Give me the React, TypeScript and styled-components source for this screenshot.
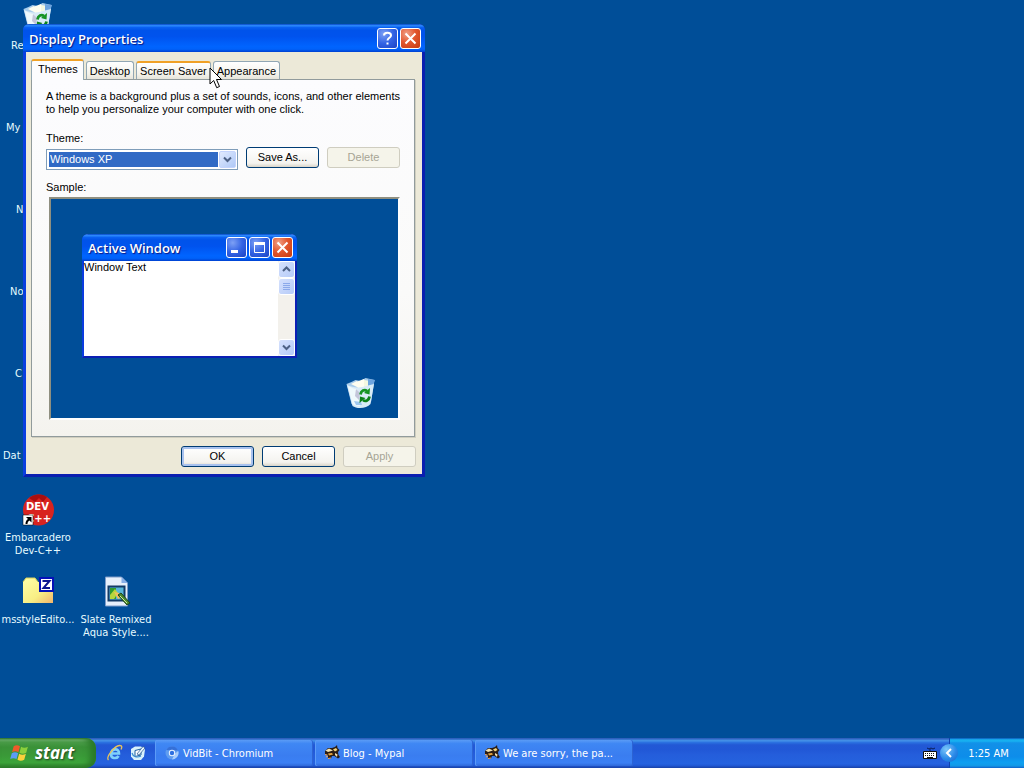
import React from 'react';
import styled, { createGlobalStyle, css } from 'styled-components';

const UI = `"Liberation Sans", Arial, sans-serif`;
const SHELL = `"DejaVu Sans Condensed", "DejaVu Sans", sans-serif`;
const CAPTION = `"Open Sans", "Noto Sans", sans-serif`;

const GlobalStyle = createGlobalStyle`
  * { box-sizing: border-box; }
  body { margin: 0; background: #004e98; cursor: default; }
  button, select { font: inherit; margin: 0; }
  svg { display: block; flex: none; }
`;

const Screen = styled.div`
  display: flex;
  flex-direction: column;
  min-height: 100vh;
  overflow: hidden;
  position: relative;
  background: #004e98;
  font: 11px/13px ${UI};
  color: #000;
`;

/* Desktop icons */
const Desktop = styled.main`
  flex: 1;
  display: grid;
  grid-template-columns: repeat(2, 76px);
  grid-auto-rows: 82px;
  column-gap: 2px;
  padding-top: 2px;
`;
const Shortcut = styled.div<{ $col: number; $row: number }>`
  grid-column: ${p => p.$col};
  grid-row: ${p => p.$row};
  display: flex;
  flex-direction: column;
  align-items: center;
  gap: 5px;
  font: 11px/13px ${SHELL};
  color: #e6fbff;
  text-align: center;
  white-space: pre;
`;
const IconSlot = styled.div`
  height: 32px;
  width: 32px;
`;
const CoveredLabel = styled.span<{ $indent: number }>`
  align-self: flex-start;
  padding-left: ${p => p.$indent}px;
`;

/* Windows */
const captionFill = 'linear-gradient(#0846c4 0, #2d8cff 6%, #0a62f2 12%, #0053ea 22%, #0053ee 45%, #0064ff 80%, #0062fa 90%, #0040d0 100%)';

const Dialog = styled.section`
  position: absolute;
  left: 23px;
  top: 24px;
  width: 402px;
  border: 3px solid #0831d9;
  border-color: #0831d9 #0a1fb0 #0a1fb0 #0a3fe0;
  border-top: 0;
  border-radius: 6px 6px 0 0;
  background: #ece9d8;
`;
const Caption = styled.header<{ $tight?: boolean }>`
  display: flex;
  align-items: center;
  gap: 2px;
  height: ${p => (p.$tight ? 27 : 28)}px;
  margin: 0 ${p => (p.$tight ? -2 : -3)}px;
  padding: ${p => (p.$tight ? '0 4px' : '1px 4px')} 0 6px;
  border-radius: 6px 6px 0 0;
  background: ${captionFill};
`;
const CaptionText = styled.h1`
  flex: 1;
  margin: 0;
  font: 600 13px/18px ${CAPTION};
  color: #fff;
  text-shadow: 1px 1px 1px #0a1883;
`;
const CaptionButton = styled.button<{ $danger?: boolean }>`
  width: 21px;
  height: 21px;
  padding: 0;
  display: grid;
  place-items: center;
  border: 1px solid #fff;
  border-radius: 3px;
  background: ${p =>
    p.$danger
      ? 'radial-gradient(circle at 30% 25%, #f0a188 0, #e2572f 45%, #c5390f 100%)'
      : 'radial-gradient(circle at 30% 25%, #7da0f5 0, #3363e4 50%, #1b43c4 100%)'};
`;

const DialogBody = styled.div`
  padding: 7px 7px 7px 5px;
`;
const TabList = styled.div`
  display: flex;
  align-items: flex-end;
  gap: 2px;
`;
const Tab = styled.button<{ $active?: boolean; $hot?: boolean }>`
  height: 18px;
  padding: 1px 3px 0;
  border: 1px solid #91a7b4;
  border-bottom: 0;
  border-radius: 3px 3px 0 0;
  background: linear-gradient(#fff, #f3f2ea 70%, #e6e4da);
  white-space: nowrap;
  ${p =>
    (p.$active || p.$hot) &&
    css`
      border-top: 2px solid #f0a126;
    `}
  ${p =>
    p.$active &&
    css`
      height: 21px;
      margin-bottom: -1px;
      padding: 0 5px 2px 6px;
      background: #fcfcfe;
      position: relative;
    `}
`;
const Panel = styled.div`
  border: 1px solid #919b9c;
  box-shadow: 1px 1px 0 #d0cebf;
  background: linear-gradient(#fcfcfe, #fafaf9 60%, #f4f3ee);
  padding: 10px 14px 16px;
`;
const Intro = styled.p`
  margin: 0 0 16px;
  white-space: nowrap;
`;
const Label = styled.label`
  display: block;
`;
const SampleLabel = styled.div`
  margin-top: 11px;
`;
const ThemeRow = styled.div`
  display: flex;
  align-items: flex-start;
  gap: 8px;
  margin-top: 2px;
`;
const Combo = styled.div`
  flex: 1;
  display: flex;
  height: 21px;
  margin-top: 2px;
  padding: 1px;
  border: 1px solid #7f9db9;
  background: #fff;
`;
const ComboSelect = styled.select`
  appearance: none;
  flex: 1;
  min-width: 0;
  margin: 1px;
  padding: 0 1px;
  border: 0;
  border-radius: 0;
  outline: 0;
  background: #316ac5;
  color: #fff;
  line-height: 15px;
`;
const ComboArrow = styled.span`
  width: 17px;
  display: grid;
  place-items: center;
  border: 1px solid #c3d3fd;
  border-radius: 2px;
  background: linear-gradient(135deg, #e1eafe, #aec8f7);
`;
const PushButton = styled.button<{ $primary?: boolean }>`
  width: 73px;
  height: 21px;
  padding: 0;
  border: 1px solid #003c74;
  border-radius: 3px;
  background: linear-gradient(#fff, #f4f3ef 80%, #d9d4c8);
  color: #000;
  ${p =>
    p.$primary &&
    css`
      box-shadow: inset 0 0 0 2px #a9c2ee;
    `}
  &:disabled {
    border-color: #cfcdc0;
    background: #f5f4ea;
    color: #a6a495;
  }
`;
const Preview = styled.div`
  margin: 3px 0 0 3px;
  padding: 35px 21px 9px 31px;
  border: 2px solid;
  border-color: #8f8f80 #fff #fff #8f8f80;
  background: #004e98;
`;
const SampleWindow = styled.div`
  width: 215px;
  border: 2px solid #0c1fb4;
  border-left-color: #0a3be0;
  border-top: 0;
  border-radius: 6px 6px 0 0;
  background: #fff;
`;
const SampleClient = styled.div`
  display: flex;
  justify-content: space-between;
  height: 95px;
`;
const ScrollTrack = styled.div`
  width: 17px;
  display: flex;
  flex-direction: column;
  background: #f3f1ec;
`;
const ScrollPiece = styled.div<{ $last?: boolean }>`
  height: 17px;
  display: grid;
  place-items: center;
  border: 1px solid #fff;
  border-radius: 3px;
  background: linear-gradient(135deg, #d5e1fd, #b6cbf8);
  margin-top: ${p => (p.$last ? 'auto' : '0')};
`;
const BinRow = styled.div`
  display: flex;
  justify-content: flex-end;
  margin-top: 19px;
`;
const Actions = styled.footer`
  display: flex;
  justify-content: flex-end;
  gap: 8px;
  margin: 9px -1px 0 0;
`;

/* Taskbar */
const Taskbar = styled.nav`
  display: flex;
  align-items: stretch;
  height: 30px;
  position: relative;
  background: linear-gradient(#2a5cb8 0, #3165c4 3%, #4490e6 8%, #3883e5 12%, #2b71e0 15%, #2258d5 23%, #2157d6 38%, #245ddb 54%, #2562df 86%, #2158d4 92%, #1941a5 100%);
  font: 11px/13px ${SHELL};
  color: #fff;
`;
const StartButton = styled.button`
  width: 96px;
  display: flex;
  align-items: center;
  gap: 5px;
  padding: 0 0 0 10px;
  border: 0;
  border-radius: 0 10px 10px 0;
  background: linear-gradient(#2c6a2c 0, #79b878 6%, #4c9d4a 14%, #3a9138 30%, #3a9a38 60%, #3da53b 82%, #2c7a2a 100%);
  box-shadow: inset -6px 0 6px #2a7a28;
  color: #fff;
  font: italic 700 17px/24px ${CAPTION};
  text-shadow: 1px 1px 2px #22421f;
`;
const QuickLaunch = styled.div`
  display: flex;
  align-items: center;
  gap: 7px;
  padding: 0 9px 0 11px;
`;
const Tasks = styled.div`
  flex: 1;
  min-width: 0;
  display: flex;
  gap: 2px;
  padding: 2px 0;
`;
const TaskButton = styled.button`
  flex: 0 1 158px;
  display: flex;
  align-items: center;
  gap: 3px;
  padding: 0 9px;
  border: 0;
  border-radius: 2px;
  background: linear-gradient(#5a9bf6 0, #3f87f4 14%, #3a7df0 60%, #3b80f5 88%, #2f68d8 100%);
  box-shadow: inset 1px 0 0 #5b9bf8, inset -1px 0 0 #2c63d3;
  color: #fff;
  white-space: nowrap;
`;
const TrayIcons = styled.div`
  display: flex;
  align-items: center;
  padding-right: 12px;
`;
const Tray = styled.div`
  display: flex;
  align-items: center;
  justify-content: center;
  width: 75px;
  padding-left: 3px;
  position: relative;
  background: linear-gradient(#0c59b9 1%, #139ee9 3%, #18b5f2 10%, #139beb 14%, #1290e8 19%, #0d8dea 63%, #0d9ff1 81%, #119be9 91%, #137ed7 97%, #095bc9);
  border-left: 1px solid #1042af;
`;
const Expander = styled.button`
  position: absolute;
  left: -10px;
  top: 6px;
  width: 18px;
  height: 18px;
  padding: 0;
  display: grid;
  place-items: center;
  border: 0;
  border-radius: 50%;
  background: radial-gradient(circle at 35% 30%, #7cc6fa, #2a8ae8 55%, #1464cc);
`;
const Pointer = styled.svg`
  position: absolute;
  left: 209px;
  top: 67px;
  pointer-events: none;
`;

const RecycleBin = () => (
  <svg width="32" height="32" viewBox="0 0 32 32" aria-hidden="true">
    <path d="M1.500 7l5-2 4-2 5 1 5-3 9 2-3.500 22-6 4-9 .5-4.500-2.500z" fill="#a9cdec" />
    <path d="M6 7l6-3 2 7zM11 5l8-3 3 9-9 1z" fill="#fffef0" />
    <path d="M19 3l6 1-2 8-4-1z" fill="#f4f8e0" />
    <path d="M23 2l7 1-2 5-5 3z" fill="#6da4df" />
    <path d="M2 8c6 3 14 3 19 1l8-2-3.500 20c-4 5-14 5-18 2z" fill="#d8ebf7" />
    <path d="M3 9c4 2 6 3 9 3l3 17c-3 0-6-1-7.500-2z" fill="#eff9fc" />
    <path d="M11 12l4 4-1 7-4-4z" fill="#c4c6da" />
    <path d="M9 24l7 1 1 3-6 0z" fill="#9fc8ef" />
    <path d="M15.500 17.500c.5-4 4-5.500 6.500-3.500" fill="none" stroke="#169423" strokeWidth="2.800" />
    <path d="M25 11l-.5 6.500-5.500-1.500z" fill="#169423" />
    <path d="M24.500 19.500c-.5 4-4 5.500-6.500 3.500" fill="none" stroke="#0c8119" strokeWidth="2.800" />
    <path d="M14.500 26l.5-6.500 5.500 1.500z" fill="#0c8119" />
  </svg>
);

const DevIcon = () => (
  <svg width="32" height="32" viewBox="0 0 32 32" aria-hidden="true">
    <circle cx="16.500" cy="16" r="15.500" fill="#d8231f" />
    <path d="M7 4a15.500 15.500 0 0 1 18-1l-4 5-4-4-4 4z" fill="#a80f10" />
    <text x="4" y="16" fontFamily="DejaVu Sans, sans-serif" fontWeight="700" fontSize="10" fill="#fff">DEV</text>
    <text x="5" y="28" fontFamily="DejaVu Sans, sans-serif" fontWeight="700" fontSize="10" fill="#fff">C++</text>
    <path d="M1 21h10v10H1z" fill="#fff" stroke="#000" strokeWidth=".5" />
    <path d="M4 23h5.500v5.500L7.500 26.500C6 27.500 5.500 28.500 5.500 30H3.500c0-2.500 1-4 2.500-5z" fill="#000" />
  </svg>
);

const FolderIcon = () => (
  <svg width="32" height="32" viewBox="0 0 32 32" aria-hidden="true">
    <defs>
      <linearGradient id="folder" x1="0" y1="0" x2="1" y2="1">
        <stop offset="0" stopColor="#ffffa8" />
        <stop offset=".6" stopColor="#f8ee84" />
        <stop offset="1" stopColor="#f3b46c" />
      </linearGradient>
    </defs>
    <path d="M1 6l3-4h9l3 4h15v21H1z" fill="url(#folder)" />
    <path d="M1 6l3-4h9l3 4" fill="none" stroke="#d8cf5a" />
    <path d="M18 2h13v13H18z" fill="#fff" stroke="#0510b8" strokeWidth="2" />
    <path d="M20.500 5h7L21.500 12H28" fill="none" stroke="#0a1590" strokeWidth="2" />
  </svg>
);

const ThemeFileIcon = () => (
  <svg width="32" height="32" viewBox="0 0 32 32" aria-hidden="true">
    <path d="M5.500 1h16l6 6v23h-22z" fill="#e6effb" stroke="#7d9bc9" />
    <path d="M21.500 1v6h6z" fill="#86aee8" />
    <path d="M8.500 10.500h16v14h-16z" fill="#57b6da" stroke="#123a67" strokeWidth="2" />
    <path d="M10 12h6v11h-6z" fill="#2f9a2d" />
    <path d="M10 19l5-6 3 4-4 6h-4z" fill="#b6d63c" />
    <path d="M14 16l5 1 3 4-4 2z" fill="#f1c15d" />
    <path d="M18 19l3-2 9 10-3 2z" fill="#4c8a2e" stroke="#1e4718" />
    <path d="M20 20l7 7" stroke="#cfe8a0" />
  </svg>
);

const Flag = () => (
  <svg width="20" height="20" viewBox="0 0 19 18" aria-hidden="true">
    <path d="M3.500 2.500c2-1.300 4-1.200 6 0L8 8.200c-2-1.200-4-1.200-6 0z" fill="#ef5a2a" />
    <path d="M10.500 3c2 1.200 4.200 1.200 6.500 0l-1.600 5.700c-2.200 1.200-4.300 1.200-6.400 0z" fill="#8bcf3c" />
    <path d="M1.700 9.300c2-1.200 4-1.200 6 0l-1.500 5.500c-2-1.200-4-1.200-6 0z" fill="#5b9cf5" />
    <path d="M8.700 9.800c2.100 1.200 4.200 1.200 6.400 0l-1.600 5.700c-2.200 1.200-4.200 1.200-6.400 0z" fill="#fbd13c" />
  </svg>
);

const BrowserE = () => (
  <svg width="16" height="18" viewBox="0 0 16 18" aria-hidden="true">
    <path d="M4 9.500h8C12.200 4 5 4 4 9.500c-.4 5.500 5.800 5.500 7.600 2.500" fill="none" stroke="#7fd0fb" strokeWidth="2.600" />
    <path d="M1.500 16c-3-3 6-14 11-14.500 3-.2 2.500 2 1.500 4" fill="none" stroke="#e9c45c" strokeWidth="1.300" />
  </svg>
);

const ShowDesktop = () => (
  <svg width="16" height="16" viewBox="0 0 16 16" aria-hidden="true">
    <path d="M1 4l4-2.500 6 0 4 3-1 7-3 3.500H4l-3-3.500z" fill="#d8f1fb" />
    <path d="M5 5.500l6-1.500v6l-6 1.500z" fill="#fff" stroke="#1c5e9f" />
    <path d="M7 9l6-7.500 2 1.500-6 7z" fill="#e9f7ff" stroke="#24508a" strokeWidth=".7" />
    <path d="M2 8c1 4 5 5 9 3" fill="none" stroke="#3a8ed0" strokeWidth="1.200" />
  </svg>
);

const ChromiumIcon = () => (
  <svg width="16" height="16" viewBox="0 0 16 16" aria-hidden="true">
    <circle cx="8" cy="8" r="6.500" fill="#5f9df0" />
    <path d="M2.300 5A6.500 6.500 0 0 1 14 5.500H8z" fill="#3570d8" />
    <path d="M14.200 6A6.500 6.500 0 0 1 8 14.500l3-6z" fill="#a9cdfb" />
    <circle cx="8" cy="8" r="3.200" fill="#e8f2ff" />
    <circle cx="8" cy="8" r="2.200" fill="#2d6fe0" />
  </svg>
);

const MypalIcon = () => (
  <svg width="16" height="16" viewBox="0 0 16 16" aria-hidden="true">
    <path d="M1 6l3-3 4 0 3-1 2-2 .5 3 2 2-1.500 2 .5 3 1.500 2-2 1.500-3.500-2.500-2.500 0-1 2.500-3 .5 0-3L1 9z" fill="#2a1c14" />
    <path d="M1.500 5.500L5 3.500 9 5.500 4 7z" fill="#f6e3b0" />
    <path d="M9 4.500l3-1.500 1.500 2L11 6.500z" fill="#f2d27b" />
    <path d="M4 8.500l4-.5 1 1.500-4 1z" fill="#e8a53c" />
    <path d="M11 8l2.500 1.500L13 12l-2-2z" fill="#f0ddb0" />
    <path d="M1 9.500l2.500.5M4 13.500l3-.5M2 12l2-1" stroke="#f0a860" />
  </svg>
);

const KeyboardIcon = () => (
  <svg width="14" height="13" viewBox="0 0 14 13" aria-hidden="true">
    <path d="M4 1l2 1 2-1 2 1 2-1M7 2v3" fill="none" stroke="#0b1e57" />
    <path d="M.5 4.500h13v7H.5z" fill="#fff" stroke="#111" />
    <path d="M2 6.500h10M2 8.500h10" stroke="#111" strokeDasharray="1 1" />
    <path d="M4 10.500h6" stroke="#111" />
  </svg>
);

const Chevron = ({ up }: { up?: boolean }) => (
  <svg width="9" height="7" viewBox="0 0 9 7" aria-hidden="true">
    <path d={up ? 'M1 5l3.500-3.500L8 5' : 'M1 1.500L4.500 5 8 1.500'} fill="none" stroke="#4d6185" strokeWidth="2" />
  </svg>
);

const Cross = () => (
  <svg width="13" height="13" viewBox="0 0 13 13" aria-hidden="true">
    <path d="M1.500 1.500l10 10M11.500 1.500l-10 10" stroke="#fff" strokeWidth="2" />
  </svg>
);

const coveredLabels = [
  { text: 'Re', indent: 11 },
  { text: 'My', indent: 6 },
  { text: 'N', indent: 16 },
  { text: 'No', indent: 10 },
  { text: 'C', indent: 15 },
  { text: 'Dat', indent: 3 },
];

const tasks = [
  { title: 'VidBit - Chromium', icon: <ChromiumIcon /> },
  { title: 'Blog - Mypal', icon: <MypalIcon /> },
  { title: 'We are sorry, the pa...', icon: <MypalIcon /> },
];

export default function App() {
  return (
    <Screen>
      <GlobalStyle />
      <Desktop>
        {coveredLabels.map((item, i) => (
          <Shortcut key={item.text} $col={1} $row={i + 1}>
            <IconSlot>{i === 0 && <RecycleBin />}</IconSlot>
            <CoveredLabel $indent={item.indent}>{item.text}</CoveredLabel>
          </Shortcut>
        ))}
        <Shortcut $col={1} $row={7}>
          <DevIcon />
          <span>{'Embarcadero\nDev-C++'}</span>
        </Shortcut>
        <Shortcut $col={1} $row={8}>
          <FolderIcon />
          <span>msstyleEdito...</span>
        </Shortcut>
        <Shortcut $col={2} $row={8}>
          <ThemeFileIcon />
          <span>{'Slate Remixed\nAqua Style....'}</span>
        </Shortcut>
      </Desktop>

      <Dialog role="dialog" aria-labelledby="dialog-title">
        <Caption>
          <CaptionText id="dialog-title">Display Properties</CaptionText>
          <CaptionButton aria-label="Help">
            <svg width="13" height="15" viewBox="0 0 13 15" aria-hidden="true">
              <path d="M3 4.500C3 .8 10 .8 10 4.500c0 2.300-3.500 2.300-3.500 5" fill="none" stroke="#fff" strokeWidth="2" />
              <path d="M5.500 11.500h2v2h-2z" fill="#fff" />
            </svg>
          </CaptionButton>
          <CaptionButton $danger aria-label="Close"><Cross /></CaptionButton>
        </Caption>
        <DialogBody>
          <TabList role="tablist">
            <Tab role="tab" aria-selected="true" $active>Themes</Tab>
            <Tab role="tab">Desktop</Tab>
            <Tab role="tab" $hot>Screen Saver</Tab>
            <Tab role="tab">Appearance</Tab>
          </TabList>
          <Panel role="tabpanel">
            <Intro>
              A theme is a background plus a set of sounds, icons, and other elements
              <br />
              to help you personalize your computer with one click.
            </Intro>
            <Label htmlFor="theme">Theme:</Label>
            <ThemeRow>
              <Combo>
                <ComboSelect id="theme" defaultValue="xp">
                  <option value="xp">Windows XP</option>
                </ComboSelect>
                <ComboArrow><Chevron /></ComboArrow>
              </Combo>
              <PushButton>Save As...</PushButton>
              <PushButton disabled>Delete</PushButton>
            </ThemeRow>
            <SampleLabel>Sample:</SampleLabel>
            <Preview>
              <SampleWindow>
                <Caption $tight>
                  <CaptionText as="h2">Active Window</CaptionText>
                  <CaptionButton aria-label="Minimize">
                    <svg width="13" height="13" viewBox="0 0 13 13" aria-hidden="true"><path d="M1 9h7v3H1z" fill="#fff" /></svg>
                  </CaptionButton>
                  <CaptionButton aria-label="Maximize">
                    <svg width="13" height="13" viewBox="0 0 13 13" aria-hidden="true">
                      <path d="M1.500 2v9.500h10V2" fill="none" stroke="#fff" />
                      <path d="M1 1h11v3H1z" fill="#fff" />
                    </svg>
                  </CaptionButton>
                  <CaptionButton $danger aria-label="Close sample"><Cross /></CaptionButton>
                </Caption>
                <SampleClient>
                  <span>Window Text</span>
                  <ScrollTrack>
                    <ScrollPiece><Chevron up /></ScrollPiece>
                    <ScrollPiece>
                      <svg width="7" height="8" viewBox="0 0 7 8" aria-hidden="true">
                        <path d="M0 .5h7M0 2.500h7M0 4.500h7M0 6.500h7" stroke="#8ba9ea" />
                      </svg>
                    </ScrollPiece>
                    <ScrollPiece $last><Chevron /></ScrollPiece>
                  </ScrollTrack>
                </SampleClient>
              </SampleWindow>
              <BinRow><RecycleBin /></BinRow>
            </Preview>
          </Panel>
          <Actions>
            <PushButton $primary>OK</PushButton>
            <PushButton>Cancel</PushButton>
            <PushButton disabled>Apply</PushButton>
          </Actions>
        </DialogBody>
      </Dialog>

      <Taskbar>
        <StartButton><Flag />start</StartButton>
        <QuickLaunch><BrowserE /><ShowDesktop /></QuickLaunch>
        <Tasks>
          {tasks.map(t => (
            <TaskButton key={t.title}>{t.icon}{t.title}</TaskButton>
          ))}
        </Tasks>
        <TrayIcons><KeyboardIcon /></TrayIcons>
        <Tray>
          <Expander aria-label="Show hidden icons">
            <svg width="8" height="10" viewBox="0 0 8 10" aria-hidden="true">
              <path d="M6 1L2 5l4 4" fill="none" stroke="#fff" strokeWidth="2" />
            </svg>
          </Expander>
          <span>1:25 AM</span>
        </Tray>
      </Taskbar>

      <Pointer width="14" height="23" viewBox="0 0 14 23" aria-hidden="true">
        <path d="M1 1v16l3.700-3.500 3 7.200 2.800-1.200-3-7H12.500z" fill="#fff" stroke="#000" />
      </Pointer>
    </Screen>
  );
}
